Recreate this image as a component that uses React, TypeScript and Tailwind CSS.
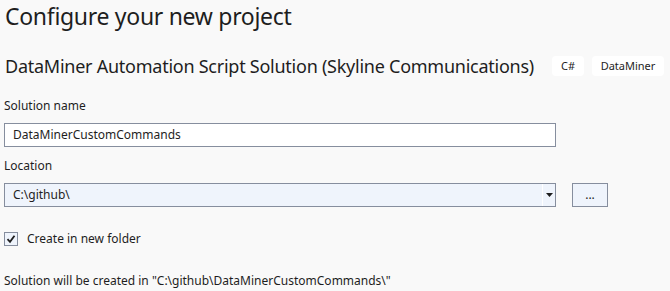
import React from 'react';

const Badge: React.FC<{ label: string; w: string }> = ({ label, w }) => (
  <span className={`${w} h-[20px] flex items-center justify-center bg-white rounded-[4px] text-[11px] text-[#1e1e1e]`}>
    {label}
  </span>
);

export default function App() {
  return (
    <div className="w-[670px] h-[291px] overflow-hidden bg-[#f9f9f9] text-[#1e1e1e] pl-[4px] font-['Noto_Sans',sans-serif]">
      {/* Header */}
      <h1 className="ml-[1px] text-[23px] leading-[32px] tracking-[-0.3px]">Configure your new project</h1>

      <div className="mt-[23px] flex items-center h-[22px]">
        <div className="w-[547px] ml-[1px] text-[18px] leading-[22px] tracking-[-0.25px]">
          DataMiner Automation Script Solution (Skyline Communications)
        </div>
        <div className="flex gap-[8px]">
          <Badge label="C#" w="w-[32px]" />
          <Badge label="DataMiner" w="w-[72px]" />
        </div>
      </div>

      {/* Solution name */}
      <div className="mt-[21px] text-[12px] leading-[16px]">Solution name</div>
      <div className="mt-[9px] w-[552px] h-[24px] border border-[#868e9e] bg-white flex items-center pl-[8px] text-[12px]">
        DataMinerCustomCommands
      </div>

      {/* Location */}
      <div className="mt-[11px] text-[12px] leading-[16px]">Location</div>
      <div className="mt-[9px] flex items-center gap-[16px]">
        <div className="w-[552px] h-[24px] border border-[#868e9e] bg-[#eff4fc] flex items-center text-[12px]">
          <span className="flex-1 pl-[8px]">C:\github\</span>
          <div className="w-[13px] h-full border-l border-white flex items-center justify-center">
            <svg width="7" height="4" viewBox="0 0 7 4">
              <path d="M0 0 H7 L3.5 4 Z" fill="#1e1e1e" />
            </svg>
          </div>
        </div>
        <button className="w-[36px] h-[24px] border border-[#868e9e] bg-[#eff4fc] text-[12px] leading-none flex items-center justify-center">
          ...
        </button>
      </div>

      {/* Checkbox */}
      <label className="mt-[23px] flex items-center gap-[9px] text-[12px]">
        <span className="w-[14px] h-[14px] border border-[#868e9e] bg-[#eff4fc] flex items-center justify-center">
          <svg width="10" height="10" viewBox="0 0 10 10">
            <path d="M1.5 5.2 L4 7.8 L8.5 1.8" stroke="#1e1e1e" strokeWidth="1.8" fill="none" />
          </svg>
        </span>
        Create in new folder
      </label>

      <div className="mt-[25px] text-[12px] leading-[16px]">
        Solution will be created in "C:\github\DataMinerCustomCommands\"
      </div>
    </div>
  );
}
